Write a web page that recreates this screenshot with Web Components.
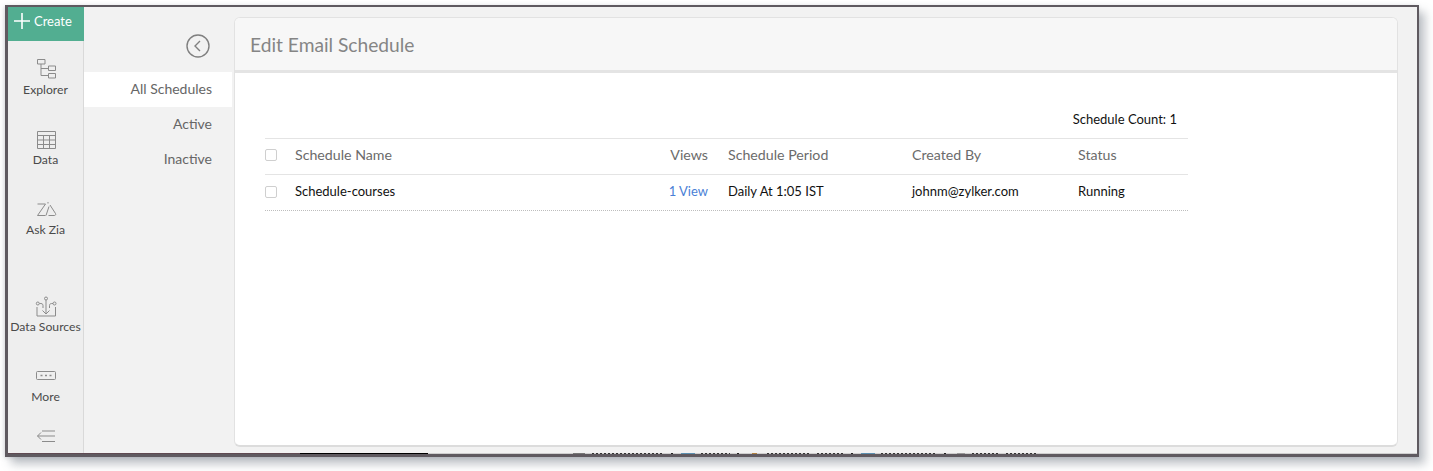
<!DOCTYPE html>
<html>
<head>
<meta charset="utf-8">
<title>Edit Email Schedule</title>
<style>
  html, body { margin: 0; background: #fff; }
  body { font-family: Lato, "Liberation Sans", sans-serif; width: 1433px; height: 471px; overflow: hidden; }
  svg { display: block; fill: none; stroke: #8b8b8b; stroke-width: 1; }
</style>
</head>
<body>
<app-window>
  <side-rail>
    <rail-create slot="top">Create</rail-create>
    <rail-item label="Explorer" style="margin-top:17px">
      <svg width="22" height="22" viewBox="0 0 22 22"><path d="M2.500 1.500h7.500v4.500h-7.500zM13.500 8h7v4.500h-7zM13.500 15.500h7v4.500h-7zM6 6v11.500h7.500M6 10.500h7.500"/></svg>
    </rail-item>
    <rail-item label="Data" style="margin-top:32px">
      <svg width="22" height="20" viewBox="0 0 22 20"><path d="M2.500 1.500h18v17h-18zM2.500 5.500h18M2.500 10h18M2.500 14.500h18M8.500 5.500v13M14.500 5.500v13"/></svg>
    </rail-item>
    <rail-item label="Ask Zia" style="margin-top:33px">
      <svg width="22" height="19" viewBox="0 0 22 19"><path d="M2.500 3h8L2.500 14.500h8M14 5.500L11 14.500M13 1v1.500M15 4l5.500 8.500c.5 1 0 2-1 2h-6"/></svg>
    </rail-item>
    <rail-item label="Data Sources" style="margin-top:58px">
      <svg width="22" height="21" viewBox="0 0 22 21"><path d="M2 11v9h18.500v-9M11 4v14M7.500 14.500l3.500 3.500 3.500-3.500M4.500 7.500c2 0 3.500 0 3.500 2v2.500M18 7.500c-2 0-3.500 0-3.500 2v2.500"/><circle cx="11" cy="2.500" r="1.500"/><circle cx="2.800" cy="7.500" r="1.500"/><circle cx="19.500" cy="7.500" r="1.500"/></svg>
    </rail-item>
    <rail-item label="More" style="margin-top:33px">
      <svg width="20" height="14" viewBox="0 0 20 14" style="margin:1px 0 4px"><rect x=".5" y="2.500" width="19" height="8" rx="1"/><path d="M4.500 6.500h2M9 6.500h2M13.500 6.500h2" stroke-width="1.500"/></svg>
    </rail-item>
    <rail-collapse slot="bottom">
      <svg width="20" height="14" viewBox="0 0 20 14"><path d="M6 2h13M1.500 7h17.500M6 12.500h13M5 3.500l-3.500 3.500 3.500 3.500"/></svg>
    </rail-collapse>
  </side-rail>
  <schedule-nav>
    <nav-link active>All Schedules</nav-link>
    <nav-link>Active</nav-link>
    <nav-link>Inactive</nav-link>
  </schedule-nav>
  <schedule-card heading="Edit Email Schedule">
    <schedule-table count="1">
      <schedule-row head>
        <span>Schedule Name</span><span>Views</span><span>Schedule Period</span><span>Created By</span><span>Status</span>
      </schedule-row>
      <schedule-row>
        <span>Schedule-courses</span><span style="color:#4a7fd6">1 View</span><span>Daily At 1:05 IST</span><span>johnm@zylker.com</span><span>Running</span>
      </schedule-row>
    </schedule-table>
  </schedule-card>
  <clip-strip slot="strip"></clip-strip>
</app-window>

<script>
/* Helper: sets up the open shadow root from a string */
class Base extends HTMLElement {
  constructor(html) {
    super();
    this.attachShadow({ mode: 'open' }).innerHTML = html;
  }
}

class AppWindow extends Base {
  constructor() {
    super(`
      <style>
        :host {
          display: flex; flex-direction: column;
          box-sizing: border-box;
          width: 1414px; height: 452px;
          margin: 5px 0 0 5px;
          background: #f2f2f2;
          border: solid #5f5a60;
          border-width: 2px 2px 3px 3px;
          box-shadow: 6px 7px 9px rgba(110,120,130,.45), -1px 1px 4px rgba(110,120,130,.25);
        }
        .main { flex: 1; display: flex; min-height: 0; }
      </style>
      <div class="main"><slot></slot></div>
      <slot name="strip"></slot>`);
  }
}
customElements.define('app-window', AppWindow);

class SideRail extends Base {
  constructor() {
    super(`
      <style>
        :host {
          display: flex; flex-direction: column; flex: none;
          box-sizing: border-box; width: 76px;
          background: #eeeeee; border-right: 1px solid #d9d9d9;
          border-bottom-left-radius: 6px;
        }
        .items { flex: 1; display: flex; flex-direction: column; }
      </style>
      <slot name="top"></slot>
      <div class="items"><slot></slot></div>
      <slot name="bottom"></slot>`);
  }
}
customElements.define('side-rail', SideRail);

class RailCreate extends Base {
  constructor() {
    super(`
      <style>
        :host {
          display: flex; align-items: center; gap: 4px; box-sizing: border-box;
          height: 34px; padding: 0 0 6px 6px; margin-right: -1px;
          background: #52ae91; color: #fff; font-size: 13px;
        }
        svg { display: block; stroke: #fff; stroke-width: 1.600; fill: none; }
      </style>
      <svg width="16" height="16" viewBox="0 0 16 16"><path d="M8 0v16M0 8h16"/></svg>
      <slot></slot>`);
  }
}
customElements.define('rail-create', RailCreate);

class RailItem extends Base {
  constructor() {
    super(`
      <style>
        :host {
          display: flex; flex-direction: column; align-items: center;
          color: #4a4a4a; font-size: 12.200px; line-height: 16px;
        }
        .label { margin-top: 2px; white-space: nowrap; }
      </style>
      <slot></slot>
      <div class="label"></div>`);
  }
  connectedCallback() {
    this.shadowRoot.querySelector('.label').textContent = this.getAttribute('label');
  }
}
customElements.define('rail-item', RailItem);

class RailCollapse extends Base {
  constructor() {
    super(`
      <style>:host { display: flex; justify-content: center; padding-bottom: 10px; }</style>
      <slot></slot>`);
  }
}
customElements.define('rail-collapse', RailCollapse);

class ScheduleNav extends Base {
  constructor() {
    super(`
      <style>
        :host { display: block; flex: none; width: 150px; }
        .back { display: flex; justify-content: flex-end; padding: 27px 24px 0 0; height: 38px; }
        svg { display: block; fill: none; stroke: #808080; stroke-width: 1.400; }
      </style>
      <div class="back">
        <svg width="24" height="24" viewBox="0 0 24 24"><circle cx="12" cy="12" r="11"/><path d="M14 7l-5 5 5 5"/></svg>
      </div>
      <slot></slot>`);
  }
}
customElements.define('schedule-nav', ScheduleNav);

class NavLink extends Base {
  constructor() {
    super(`
      <style>
        :host {
          display: block; box-sizing: border-box;
          width: 148px; height: 35px; line-height: 33px;
          padding-right: 20px; text-align: right;
          color: #666; font-size: 14px;
        }
        :host([active]) { background: #fff; }
      </style>
      <slot></slot>`);
  }
}
customElements.define('nav-link', NavLink);

class ScheduleCard extends Base {
  constructor() {
    super(`
      <style>
        :host {
          display: flex; flex-direction: column;
          box-sizing: border-box; width: 1164px; height: 430px; margin-top: 10px;
          background: #fff; border-radius: 6px; overflow: hidden;
          border: 1px solid #e2e2e2; border-bottom: 2px solid #dcdcdc;
        }
        header {
          box-sizing: border-box; flex: none; height: 55px; line-height: 53px; padding-left: 15px;
          background: #f7f7f7; border-bottom: 3px solid #e4e4e4;
          color: #858585; font-size: 19.200px;
        }
      </style>
      <header></header>
      <slot></slot>`);
  }
  connectedCallback() {
    this.shadowRoot.querySelector('header').textContent = this.getAttribute('heading');
  }
}
customElements.define('schedule-card', ScheduleCard);

class ScheduleTable extends Base {
  constructor() {
    super(`
      <style>
        :host { display: block; width: 923px; margin: 36px 0 0 30px; font-size: 13px; }
        .count { height: 29px; line-height: 20px; padding-right: 11px; text-align: right; color: #111; }
      </style>
      <div class="count"></div>
      <slot></slot>`);
  }
  connectedCallback() {
    this.shadowRoot.querySelector('.count').textContent = 'Schedule Count: ' + this.getAttribute('count');
  }
}
customElements.define('schedule-table', ScheduleTable);

class ScheduleRow extends Base {
  constructor() {
    super(`
      <style>
        :host {
          display: grid; align-items: center;
          grid-template-columns: 30px 313px 100px 204px 166px 110px;
          height: 36px; box-sizing: border-box; padding-bottom: 3px;
          color: #111;
          border-bottom: 1px dotted #bdbdbd;
        }
        :host([head]) {
          height: 37px; padding-bottom: 5px;
          color: #6b6b6b;
          font-size: 14.200px;
          border-top: 1px solid #e4e4e4;
          border-bottom: 1px solid #e4e4e4;
        }
        .box {
          box-sizing: border-box; width: 12px; height: 12px; margin-top: 2px;
          border: 1px solid #cfcfcf; border-radius: 2px; background: #fff;
        }
        ::slotted(span:nth-child(2)) { text-align: right; }
        ::slotted(span:nth-child(3)) { padding-left: 20px; }
      </style>
      <div class="box"></div>
      <slot></slot>`);
  }
}
customElements.define('schedule-row', ScheduleRow);

/* the sliver of the page behind that shows along the bottom edge */
const SLIVER = [
  [8, 300, '#5f4a52'], [300, 428, '#000'], [573, 585, '#777'],
  [592, 664, 'd'], [671, 673, '#222'], [681, 695, '#5b8fb0'], [701, 730, 'd'], [737, 739, '#222'],
  [752, 757, '#b08040'], [767, 810, 'd'], [817, 843, 'd'], [851, 853, '#222'],
  [861, 875, '#5b8fb0'], [881, 935, 'd'], [944, 946, '#222'], [957, 965, '#999'],
  [972, 1000, 'd'], [1006, 1037, 'd']
];

class ClipStrip extends Base {
  constructor() {
    super(`
      <style>
        :host { display: flex; flex: none; height: 1px; background: #cfcfcf; }
        i { display: block; height: 1px; }
        .d { background: repeating-linear-gradient(90deg, #333 0 2px, transparent 2px 4px); }
      </style>`);
    let x = 8;
    for (const [from, to, col] of SLIVER) {
      const el = document.createElement('i');
      el.style.marginLeft = (from - x) + 'px';
      el.style.width = (to - from) + 'px';
      if (col === 'd') el.className = 'd'; else el.style.background = col;
      this.shadowRoot.appendChild(el);
      x = to;
    }
  }
}
customElements.define('clip-strip', ClipStrip);
</script>
</body>
</html>
